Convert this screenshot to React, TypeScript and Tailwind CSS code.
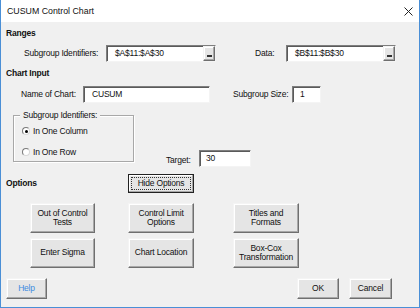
import type { ReactNode } from "react";

const btn3d =
  "bg-[#e5e5e5] border border-t-[#f4f4f4] border-l-[#f4f4f4] border-r-[#6f6f6f] border-b-[#6f6f6f] shadow-[inset_-1px_-1px_0_#a8a8a8,inset_1px_1px_0_#ffffff] flex items-center justify-center text-center";

const sunken =
  "bg-white border border-t-[#7e7e7e] border-l-[#7e7e7e] border-r-[#f4f4f4] border-b-[#f4f4f4] shadow-[inset_1px_1px_0_#5a5a5a] flex items-center";

const Btn = ({ children, className = "" }: { children: ReactNode; className?: string }) => (
  <button className={`${btn3d} leading-[9.5px] ${className}`}>{children}</button>
);

const RefField = ({ value, width }: { value: string; width: string }) => (
  <div className={`${sunken} h-[17px] ${width} pl-[8px] justify-between`}>
    <span>{value}</span>
    <span className={`${btn3d} h-[15px] w-[12px] items-end pb-[3px]`}>
      <span className="block w-[5px] h-[2px] bg-[#333]" />
    </span>
  </div>
);

const Radio = ({ checked, label }: { checked?: boolean; label: string }) => (
  <div className="flex items-center h-[10px]">
    <span className="w-[8px] h-[8px] rounded-full bg-white border border-t-[#7a7a7a] border-l-[#7a7a7a] border-r-[#d8d8d8] border-b-[#d8d8d8] flex items-center justify-center">
      {checked && <span className="w-[3px] h-[3px] rounded-full bg-black" />}
    </span>
    <span className="ml-[3px]">{label}</span>
  </div>
);

export default function App() {
  return (
    <div className="w-[420px] h-[308px] flex flex-col bg-[#f0f0f0] border-x border-b border-[#4a8fd6] text-[8.5px] tracking-[-0.2px] text-[#111] font-['Liberation_Sans',Arial,sans-serif]">
      {/* title bar */}
      <div className="h-[22px] bg-white flex items-center justify-between pl-[6px] pr-[6px] shrink-0">
        <span className="text-[8.8px] tracking-normal pt-[1px]">CUSUM Control Chart</span>
        <svg width="9" height="9" viewBox="0 0 9 9" className="mt-[1px]">
          <path d="M0.5 0.5L8.5 8.5M8.5 0.5L0.5 8.5" stroke="#222" strokeWidth="1" />
        </svg>
      </div>

      {/* Ranges */}
      <div className="h-[22px] flex items-center pl-[5px] font-bold">Ranges</div>
      <div className="h-[18px] flex items-center">
        <span className="ml-[23px] w-[82px]">Subgroup Identifiers:</span>
        <RefField value="$A$11:$A$30" width="w-[110px]" />
        <span className="ml-[39px] w-[31px]">Data:</span>
        <RefField value="$B$11:$B$30" width="w-[110px]" />
      </div>

      {/* Chart Input */}
      <div className="h-[22px] flex items-center pl-[5px] font-bold">Chart Input</div>
      <div className="h-[20px] flex items-center">
        <span className="ml-[20px] w-[62px]">Name of Chart:</span>
        <div className={`${sunken} h-[17px] w-[127px] pl-[8px]`}>CUSUM</div>
        <span className="ml-[23px] w-[59px]">Subgroup Size:</span>
        <div className={`${sunken} h-[17px] w-[29px] pl-[7px]`}>1</div>
      </div>

      {/* group box + target */}
      <div className="flex items-start">
        <div className="relative mt-[11px] ml-[12px] w-[121px] h-[47px] border border-[#a8a8a8] shadow-[inset_1px_1px_0_#fff,1px_1px_0_#fff] flex flex-col pl-[8px] pt-[10px] gap-[11px]">
          <span className="absolute -top-[6px] left-[6px] bg-[#f0f0f0] px-[3px] leading-[10px]">
            Subgroup Identifiers:
          </span>
          <Radio checked label="In One Column" />
          <Radio label="In One Row" />
        </div>
        <div className="mt-[46px] ml-[32px] flex items-center">
          <span className="w-[33px] pt-[3px]">Target:</span>
          <div className={`${sunken} h-[17px] w-[52px] pl-[6px]`}>30</div>
        </div>
      </div>

      {/* Options */}
      <div className="mt-[7px] h-[19px] flex items-center pl-[5px]">
        <span className="w-[122px] font-bold">Options</span>
        <div className="h-[19px] w-[66px] border border-[#222] flex">
          <Btn className="relative w-full h-full border-0 shadow-[inset_-1px_-1px_0_#7a7a7a,inset_1px_1px_0_#ffffff]">
            <span className="absolute inset-[2px] border border-dotted border-[#333]" />
            Hide Options
          </Btn>
        </div>
      </div>

      {/* option buttons */}
      <div className="mt-[10px] flex pl-[29px]">
        <div className="flex flex-col gap-[5px]">
          <Btn className="w-[65px] h-[30px]">
            Out of Control
            <br />
            Tests
          </Btn>
          <Btn className="w-[65px] h-[30px]">Enter Sigma</Btn>
        </div>
        <div className="flex flex-col gap-[5px] ml-[33px]">
          <Btn className="w-[66px] h-[30px]">
            Control Limit
            <br />
            Options
          </Btn>
          <Btn className="w-[66px] h-[30px]">Chart Location</Btn>
        </div>
        <div className="flex flex-col gap-[5px] ml-[39px]">
          <Btn className="w-[66px] h-[30px]">
            Titles and
            <br />
            Formats
          </Btn>
          <Btn className="w-[66px] h-[30px]">
            Box-Cox
            <br />
            Transformation
          </Btn>
        </div>
      </div>

      {/* bottom buttons */}
      <div className="mt-[10px] flex items-center pl-[5px] pr-[27px]">
        <Btn className="w-[41px] h-[21px] text-[#3b8be0]">Help</Btn>
        <Btn className="ml-auto w-[42px] h-[21px]">OK</Btn>
        <Btn className="ml-[10px] w-[43px] h-[21px]">Cancel</Btn>
      </div>
    </div>
  );
}
